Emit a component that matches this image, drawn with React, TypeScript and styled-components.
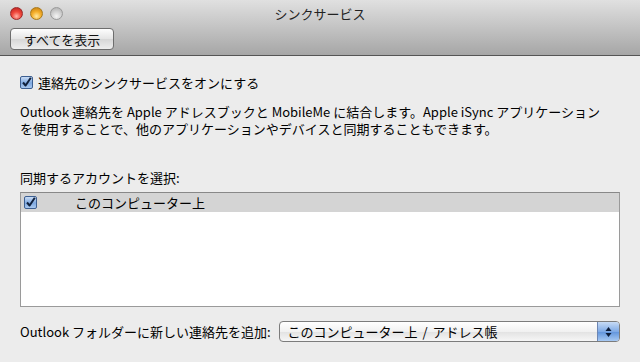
import React from "react";
import styled, { createGlobalStyle } from "styled-components";

const GlobalStyle = createGlobalStyle`
  html, body {
    margin: 0;
    padding: 0;
    background: #ececec;
  }
  body {
    font-family: "Lucida Grande", "Noto Sans CJK JP", sans-serif;
    font-size: 13px;
    color: #000;
  }
`;

const Window = styled.div`
  width: 640px;
  height: 362px;
  display: flex;
  flex-direction: column;
  background: #ececec;
  overflow: hidden;
`;

const Toolbar = styled.div`
  height: 56px;
  box-sizing: border-box;
  background: linear-gradient(#e0e0e0, #c9c9c9 40%, #a6a6a6);
  border-bottom: 1px solid #555;
  display: grid;
  grid-template-rows: 26px 1fr;
  padding: 0 10px;
`;

const TitleRow = styled.div`
  display: grid;
  grid-template-columns: 80px 1fr 80px;
  align-items: center;
`;

const Lights = styled.div`
  display: flex;
  gap: 7px;
`;

const Light = styled.span<{ $color: "red" | "yellow" | "gray" }>`
  width: 13px;
  height: 13px;
  border-radius: 50%;
  box-sizing: border-box;
  border: 1px solid
    ${(p) => (p.$color === "red" ? "#9b2a2a" : p.$color === "yellow" ? "#a87a1c" : "#9a9a9a")};
  background: ${(p) =>
    p.$color === "red"
      ? "radial-gradient(circle at 50% 75%, #ffb3a8 0%, #f0473b 45%, #b51d1d 100%)"
      : p.$color === "yellow"
      ? "radial-gradient(circle at 50% 75%, #ffe9a0 0%, #f5b02c 45%, #c0780c 100%)"
      : "radial-gradient(circle at 50% 75%, #f4f4f4 0%, #d0d0d0 50%, #a9a9a9 100%)"};
`;

const Title = styled.div`
  text-align: center;
  font-size: 13px;
  color: #222;
`;

const ToolButton = styled.button`
  align-self: start;
  justify-self: start;
  margin-top: 2px;
  width: 104px;
  height: 22px;
  font-family: inherit;
  font-size: 13px;
  color: #111;
  border: 1px solid #6d6d6d;
  border-radius: 4px;
  background: linear-gradient(#fdfdfd, #e4e4e4 50%, #d6d6d6 51%, #eeeeee);
  padding: 0;
`;

const Content = styled.div`
  padding: 0 20px;
  display: flex;
  flex-direction: column;
`;

const CheckRow = styled.label`
  display: flex;
  align-items: center;
  gap: 5px;
  margin-top: 19px;
  height: 14px;
`;

const Box = styled.span`
  width: 13px;
  height: 13px;
  box-sizing: border-box;
  border: 1px solid #3d5f91;
  border-radius: 2px;
  background: linear-gradient(#c9dcf5, #7ea8e0 55%, #a9c8ef);
  display: flex;
  align-items: center;
  justify-content: center;
  flex-shrink: 0;
`;

const Description = styled.p`
  margin: 14px 0 0;
  line-height: 17px;
`;

const SectionLabel = styled.div`
  margin-top: 32px;
  line-height: 17px;
`;

const ListBox = styled.div`
  margin-top: 6px;
  height: 115px;
  box-sizing: border-box;
  border: 1px solid #9a9a9a;
  border-top-color: #888;
  background: #fff;
`;

const ListRow = styled.div`
  height: 19px;
  background: #d4d4d4;
  display: flex;
  align-items: center;
  padding-left: 3px;
  gap: 38px;
`;

const BottomRow = styled.div`
  margin-top: 14px;
  display: flex;
  align-items: center;
  gap: 8px;
`;

const Popup = styled.div`
  flex: 1;
  height: 21px;
  box-sizing: border-box;
  border: 1px solid #7c7c7c;
  border-radius: 4px;
  background: linear-gradient(#ffffff, #f1f1f1 50%, #e2e2e2 51%, #f6f6f6);
  display: flex;
  align-items: center;
  overflow: hidden;
`;

const PopupText = styled.span`
  flex: 1;
  padding-left: 8px;
  word-spacing: 2px;
`;

const Stepper = styled.span`
  width: 21px;
  height: 100%;
  border-left: 1px solid #6d86b3;
  background: linear-gradient(#c7dbf5, #7faae6 50%, #5f93dc 51%, #a7c9f3);
  display: flex;
  align-items: center;
  justify-content: center;
`;

const Check = () => (
  <svg width="11" height="11" viewBox="0 0 11 11">
    <path d="M2 5.5 L4.6 8.5 L9.8 0.8" fill="none" stroke="#10213d" strokeWidth="2" strokeLinejoin="round" />
  </svg>
);

const App = () => {
  return (
    <Window>
      <GlobalStyle />
      <Toolbar>
        <TitleRow>
          <Lights>
            <Light $color="red" />
            <Light $color="yellow" />
            <Light $color="gray" />
          </Lights>
          <Title>シンクサービス</Title>
          <span />
        </TitleRow>
        <ToolButton>すべてを表示</ToolButton>
      </Toolbar>
      <Content>
        <CheckRow>
          <Box>
            <Check />
          </Box>
          <span>連絡先のシンクサービスをオンにする</span>
        </CheckRow>
        <Description>
          Outlook 連絡先を Apple アドレスブックと MobileMe に結合します。Apple iSync アプリケーション
          <br />
          を使用することで、他のアプリケーションやデバイスと同期することもできます。
        </Description>
        <SectionLabel>同期するアカウントを選択:</SectionLabel>
        <ListBox>
          <ListRow>
            <Box>
              <Check />
            </Box>
            <span>このコンピューター上</span>
          </ListRow>
        </ListBox>
        <BottomRow>
          <span>Outlook フォルダーに新しい連絡先を追加:</span>
          <Popup>
            <PopupText>このコンピューター上 / アドレス帳</PopupText>
            <Stepper>
              <svg width="7" height="12" viewBox="0 0 7 12">
                <path d="M3.5 1 L6.5 5 L0.5 5 Z M3.5 11 L6.5 7 L0.5 7 Z" fill="#0d1d3a" />
              </svg>
            </Stepper>
          </Popup>
        </BottomRow>
      </Content>
    </Window>
  );
};

export default App;
